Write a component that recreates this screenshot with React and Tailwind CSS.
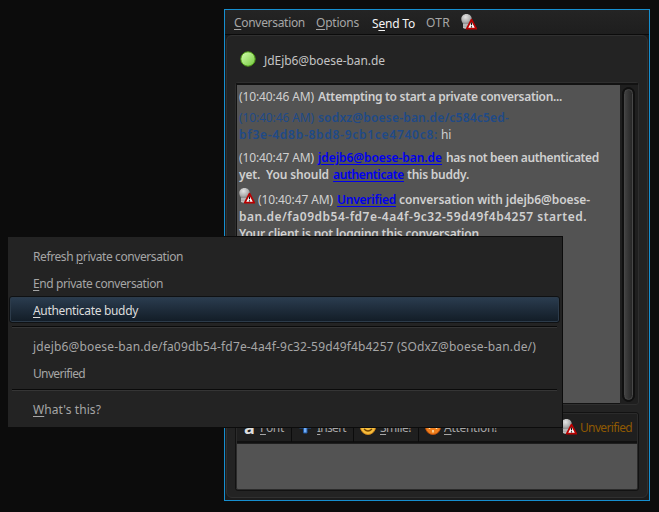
import { useLayoutEffect, useRef } from "react";

// Text run that tracks itself to fill an exact advance width.
function Run({ w, children, className = "" }) {
  const ref = useRef(null);
  useLayoutEffect(() => {
    const el = ref.current;
    el.style.letterSpacing = "0px";
    const natural = el.getBoundingClientRect().width;
    el.style.letterSpacing = `${(w - natural) / el.textContent.length}px`;
  }, [w]);
  return (
    <span ref={ref} className={`inline-block shrink-0 whitespace-pre ${className}`}>
      {children}
    </span>
  );
}

const U = ({ children }) => (
  <span className="underline decoration-1 underline-offset-2">{children}</span>
);

function Bulb({ className = "" }) {
  return (
    <svg viewBox="0 0 16 16" className={`h-4 w-4 shrink-0 ${className}`}>
      <defs>
        <radialGradient id="bulb" cx="0.4" cy="0.3" r="0.75">
          <stop offset="0" stopColor="#e4e4e4" />
          <stop offset="0.6" stopColor="#b0b0b0" />
          <stop offset="1" stopColor="#787878" />
        </radialGradient>
      </defs>
      <path d="M5.5 0C8.700 0 10.800 2.200 10.800 5c0 2.200-1.500 4-2.300 5.200H2.700C1.400 9 .3 7.300.3 5 .3 2.200 2.300 0 5.500 0Z" fill="url(#bulb)" />
      <path d="M2 9.500h6v4.200c-.6 1.800-5.200 1.800-6 0Z" fill="#9a9a9a" />
      <path d="M2 11h5M2 13.200h4" stroke="#d0d0d0" strokeWidth="1" />
      <path d="M10.500 5.600 15.200 14.700H5.800Z" fill="#fff" stroke="#b80000" strokeWidth="1.800" strokeLinejoin="round" />
      <path d="M10.500 8.300v3M10.500 12.300v1.300" stroke="#111" strokeWidth="1.200" />
    </svg>
  );
}

const Stamp = ({ children }) => <Run w={75}>{children}</Run>;

function Line({ children, className = "" }) {
  return <div className={`flex h-[17px] items-center ${className}`}>{children}</div>;
}

function Conversation() {
  return (
    <div className="flex h-[323px] rounded-[3px] border border-[#2e2e2e] bg-[#1f1f1f]">
      <div className="h-full w-[384px] overflow-hidden border-t-2 border-b border-l border-[#121212] bg-[#535353] pl-[2px] pt-[3px] text-[#d0d0d0]">
        <Line>
          <Stamp>(10:40:46 AM)</Stamp>
          <Run w={244} className="ml-1 font-semibold">Attempting to start a private conversation...</Run>
        </Line>
        <Line className="mt-[4px] text-[#204a87]">
          <Stamp>(10:40:46 AM)</Stamp>
          <Run w={191} className="ml-1 font-semibold">sodxz@boese-ban.de/c584c5ed-</Run>
        </Line>
        <Line>
          <Run w={199} className="font-semibold text-[#204a87]">bf3e-4d8b-8bd8-9cb1ce4740c8:</Run>
          <Run w={10} className="ml-[3px]">hi</Run>
        </Line>
        <Line className="mt-[6px]">
          <Stamp>(10:40:47 AM)</Stamp>
          <Run w={124} className="ml-1 font-semibold text-[#0000ee] underline underline-offset-2">jdejb6@boese-ban.de</Run>
          <Run w={153} className="ml-1 font-semibold">has not been authenticated</Run>
        </Line>
        <Line>
          <Run w={90} className="font-semibold">{"yet.  You should"}</Run>
          <Run w={71} className="ml-1 font-semibold text-[#0000ee] underline underline-offset-2">authenticate</Run>
          <Run w={62} className="ml-[3px] font-semibold">this buddy.</Run>
        </Line>
        <Line className="mt-2">
          <Bulb className="mb-2" />
          <Run w={75} className="ml-[3px]">(10:40:47 AM)</Run>
          <Run w={59} className="ml-1 font-semibold text-[#0000ee] underline underline-offset-2">Unverified</Run>
          <Run w={191} className="ml-[3px] font-semibold">conversation with jdejb6@boese-</Run>
        </Line>
        <Line>
          <Run w={348} className="font-semibold">ban.de/fa09db54-fd7e-4a4f-9c32-59d49f4b4257 started.</Run>
        </Line>
        <Line>
          <Run w={243} className="font-semibold">Your client is not logging this conversation.</Run>
        </Line>
      </div>
      <div className="flex-1 border-t-2 border-[#121212] pl-[2px] pt-[2px]">
        <div className="h-[315px] w-[13px] rounded-full border border-[#101010] bg-[#101010] p-px">
          <div className="h-full rounded-full border border-[#484848] bg-linear-to-r from-[#414141] to-[#272727]" />
        </div>
      </div>
    </div>
  );
}

function Tool({ icon, w, iw, children }) {
  return (
    <div className={`flex h-[29px] shrink-0 items-center border-r border-[#0c0c0c] ${iw}`}>
      {icon}
      <Run w={w} className="ml-1 pt-px">{children}</Run>
    </div>
  );
}

function Face({ angry }) {
  return (
    <svg viewBox="0 0 16 16" className="h-4 w-4 shrink-0">
      <circle cx="8" cy="8" r="7.500" fill={angry ? "#ee7e1c" : "#f6bd3c"} stroke={angry ? "#bb4f0c" : "#ce851b"} />
      {angry ? (
        <path d="M8 3v6M8 11v2.500M4.500 6v4M11.500 6v4" stroke="#ffe5b4" strokeWidth="1.500" />
      ) : (
        <path d="M5 5v2M11 5v2M4 10q4 4 8 0" stroke="#754600" fill="none" strokeWidth="1.200" />
      )}
    </svg>
  );
}

function Entry() {
  return (
    <div className="mt-[7px] flex h-[79px] flex-col rounded-[3px] border border-[#121212] bg-[#1f1f1f] outline -outline-offset-2 outline-[#2b2b2b]">
      <div className="flex h-[30px] shrink-0 items-center border-b-2 border-[#111] pl-2">
        <Tool w={24} iw="w-[48px]" icon={<span className="w-[12px] text-[18px] font-bold leading-4 text-[#ddd]">a</span>}><U>F</U>ont</Tool>
        <Tool w={29} iw="w-[62px] pl-[5px]" icon={
          <svg viewBox="0 0 16 16" className="h-4 w-4 shrink-0"><path d="M6.500 2.500h3.500v4h4V9h-4v5H6.500V9h-4V6.500h4Z" fill="#72aef7" stroke="#1f559d" /></svg>
        }><U>I</U>nsert</Tool>
        <Tool w={31} iw="w-[65px] pl-[6px]" icon={<Face />}><U>S</U>mile!</Tool>
        <div className="flex flex-1 items-center pl-[6px]">
          <Face angry />
          <Run w={53} className="ml-[3px] pt-px"><U>A</U>ttention!</Run>
        </div>
        <Bulb />
        <Run w={52} className="ml-[3px] mr-[6px] pt-px text-[#8f5902]">Unverified</Run>
      </div>
      <div className="mr-px mb-px mt-px flex-1 bg-[#535353]" />
    </div>
  );
}

function Item({ w, active, children }) {
  return (
    <div
      className={`ml-px mr-[2px] flex h-[27px] items-center rounded-[3px] border pl-[23px] pt-[2px] ${
        active
          ? "border-[#0f1113] bg-linear-to-b from-[#2b3d50] to-[#121c26] text-[#dcdcdc] shadow-[inset_0_0_0_1px_#2c3b4a]"
          : "border-transparent"
      }`}
    >
      <Run w={w}>{children}</Run>
    </div>
  );
}

const Rule = () => <div className="ml-1 mr-[5px] mb-1 mt-[3px] h-[2px] border-b border-[#353535] bg-[#0a0a0a]" />;

function Menu() {
  return (
    <div className="absolute left-[7px] top-[236px] h-[192px] w-[556px] border border-[#0c0c0c] bg-[#232323] pt-[5px] text-[#a6a6a6]">
      <Item w={150}>Refresh <U>p</U>rivate conversation</Item>
      <Item w={130}><U>E</U>nd private conversation</Item>
      <Item w={105} active><U>A</U>uthenticate buddy</Item>
      <Rule />
      <Item w={503}>jdejb6@boese-ban.de/fa09db54-fd7e-4a4f-9c32-59d49f4b4257 (SOdxZ@boese-ban.de/)</Item>
      <Item w={52}>Unverified</Item>
      <Rule />
      <Item w={68}><U>W</U>hat's this?</Item>
    </div>
  );
}

export default function App() {
  return (
    <div className="relative h-[512px] w-[659px] overflow-hidden bg-[#0c0c0c] pl-[224px] pt-[9px] font-['Noto_Sans','Open_Sans',sans-serif] text-[12px] leading-[17px] text-[#a6a6a6]">
      <div className="h-[492px] w-[426px] border border-[#168fd0] bg-[#1c1c1c]">
        <div className="flex h-[25px] items-center border-b border-[#0b0b0b] bg-linear-to-b from-[#242424] to-[#1e1e1e] pl-[9px]">
          <Run w={71} className="pt-px"><U>C</U>onversation</Run>
          <Run w={43} className="ml-[11px] pt-px"><U>O</U>ptions</Run>
          <Run w={43} className="ml-[13px] pt-[2px] text-[#f4f4f4]">S<U>e</U>nd To</Run>
          <Run w={24} className="ml-[11px] pt-px">OTR</Run>
          <Bulb className="ml-[11px]" />
        </div>
        <div className="mx-px h-[463px] rounded-[6px] border border-[#303030] bg-[#232323] px-2">
          <div className="flex h-[46px] items-center pl-[5px] text-[#c4c4c4]">
            <svg viewBox="0 0 16 16" className="h-4 w-4">
              <defs><linearGradient id="on" x2="1" y2="1"><stop stopColor="#d5ffb0" /><stop offset="1" stopColor="#73c83d" /></linearGradient></defs>
              <circle cx="8" cy="8" r="7.200" fill="url(#on)" stroke="#4e9a16" />
            </svg>
            <Run w={121} className="ml-2 pt-[2px]">JdEjb6@boese-ban.de</Run>
          </div>
          <Conversation />
          <Entry />
        </div>
      </div>
      <Menu />
    </div>
  );
}
